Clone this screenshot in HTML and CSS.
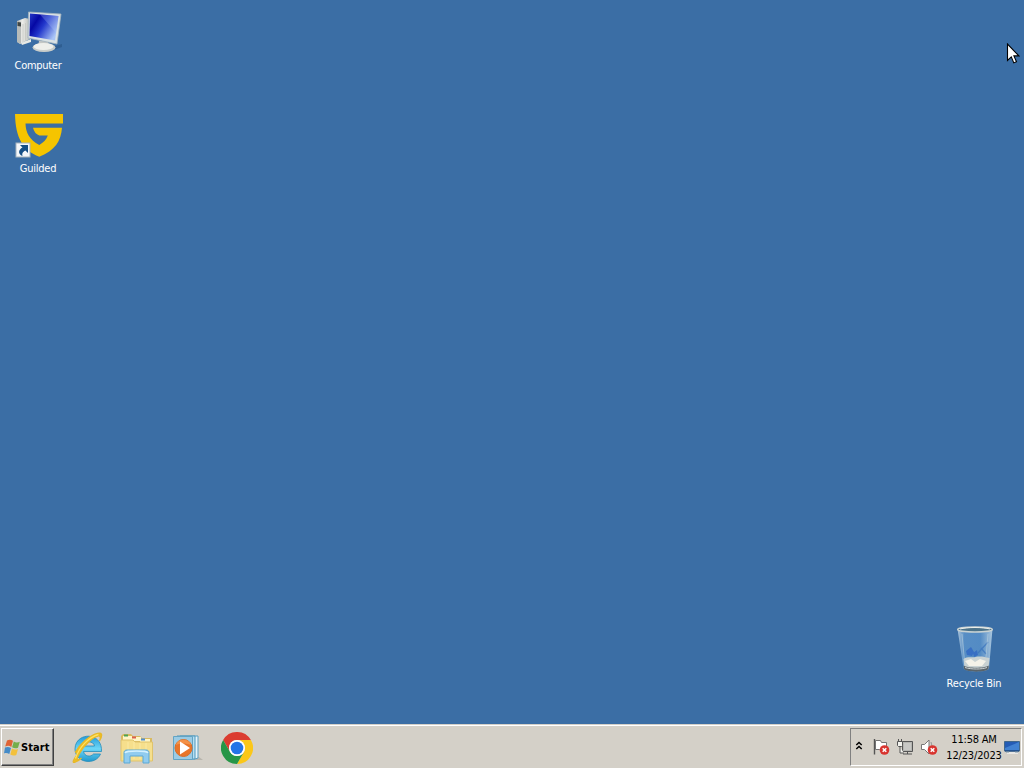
FILE: index.html
```html
<!DOCTYPE html>
<html lang="en">
<head>
<meta charset="utf-8">
<title>Desktop</title>
<link rel="stylesheet" href="styles.css">
</head>
<body>
<main class="desktop">
  <div class="shortcut computer">
    <svg width="48" height="48" viewBox="0 0 48 48">
      <defs>
        <linearGradient id="screen" x1="0" y1="0" x2="1" y2=".6"><stop offset="0" stop-color="#2639c8"/><stop offset=".3" stop-color="#0508a4"/><stop offset=".55" stop-color="#2338cc"/><stop offset="1" stop-color="#a9c4f6"/></linearGradient>
        <linearGradient id="tower" x1="0" y1="0" x2="1" y2="0"><stop offset="0" stop-color="#aeb2b0"/><stop offset=".4" stop-color="#eeeeea"/><stop offset="1" stop-color="#b9bcb8"/></linearGradient>
      </defs>
      <path d="M30 41l17-5v3l-14 5z" fill="#244d7d" opacity=".5"/>
      <path d="M2 13l8-3 5 1v20l-10 5-3-2z" fill="url(#tower)"/>
      <path d="M2 13l4 1v22l-4-2z" fill="#b7bbb9"/>
      <path d="M2.500 14l3.500.5v4l-3.500-.5z" fill="#404645"/>
      <path d="M8 16v18M10.500 15v19" stroke="#c9cbc6"/>
      <path d="M6 35l10-4v3l-9 3z" fill="#e8e9e4"/>
      <path d="M24 33h9l1 6H23z" fill="#c4c7c5"/>
      <ellipse cx="29" cy="39.500" rx="11.500" ry="4.500" fill="#c9cdca"/>
      <ellipse cx="28.500" cy="38.500" rx="10" ry="3.500" fill="#eeefeb"/>
      <path d="M13.500 4l32.500 2-4 30-29-6z" fill="#d9e2e5" stroke="#a2b3be" stroke-width=".8"/>
      <path d="M15 5.500L43.500 8 40 32.500l-25.500-4.500z" fill="url(#screen)"/>
      <path d="M25 6.500L43.500 8 41 24.800z" fill="#b9cefa" opacity=".25"/>
    </svg>
    <span class="caption">Computer</span>
  </div>

  <div class="shortcut guilded">
    <svg width="48" height="48" viewBox="0 0 48 48">
      <path d="M0 3h48v9.500H10.500c.2 9 4 16.500 13.800 21.500 4-2.500 7-5 8.500-9.500h-8.500q-5-2-6.300-7.800H47c-1 13.500-7 22.500-22.700 29C8 39.500.5 27 0 3z" fill="#f5c400"/>
      <rect x="1" y="32" width="14" height="14" fill="#f4f7fa" stroke="#a7b3bd"/>
      <path d="M5 34h8v8l-2.600-2.500c-3 1.500-3.400 3-2.900 5.500C2.500 43 3.500 38.500 7.500 36.500z" fill="#164f86"/>
    </svg>
    <span class="caption">Guilded</span>
  </div>

  <div class="shortcut recycle">
    <svg width="48" height="48" viewBox="0 0 48 48">
      <defs><linearGradient id="glass"><stop offset="0" stop-color="#c1d5e5" stop-opacity=".85"/><stop offset=".2" stop-color="#6098cf" stop-opacity=".75"/><stop offset=".65" stop-color="#5b95cf" stop-opacity=".75"/><stop offset="1" stop-color="#bfd7e8" stop-opacity=".85"/></linearGradient></defs>
      <path d="M5.500 5h35L37 44c-.5 5-25 5-25.500 0z" fill="url(#glass)"/>
      <path d="M11.500 35c4-3 9-1 12-2 5-1 9 0 14 1l-1 10c-3 3-21 3-24 0z" fill="#c9d2d3"/>
      <path d="M13 37l6-2 4 3 5-3 6 2-4 5H17z" fill="#f4f2e9"/>
      <path d="M11.500 41.500c4 3 21 3 25.300 0l-.3 3.500c-3 3.500-21.500 3.500-24.500 0z" fill="#59646b"/>
      <path d="M13 43.500c6 2 17 2 22 0" stroke="#ccd2d3" fill="none"/>
      <path d="M14 27l5-4 3 5-2 4-5-1zM21 29l4-3 1 5-4 2z" fill="#285fc3" opacity=".65"/>
      <path d="M26 29l10-11M29 24l5 6" fill="none" stroke="#3974bd" stroke-width="1.300" opacity=".7"/>
      <path d="M10 10l2.500 27M36 10l-2 23" stroke="#b6cfdf" opacity=".6"/>
      <ellipse cx="23" cy="5.500" rx="17.300" ry="2.500" fill="#4b7289" stroke="#c9d2d2" stroke-width="1.500"/>
      <path d="M8 5c7-2 23-2 30 0" fill="none" stroke="#eef0ec"/>
    </svg>
    <span class="caption">Recycle Bin</span>
  </div>

  <svg class="pointer" width="14" height="22" viewBox="0 0 14 22"><path d="M1.500 1v16.500l3.800-3.600 2.500 6 2.700-1.100-2.600-5.900h5z" fill="#fff" stroke="#000" stroke-width="1.100"/></svg>
</main>

<footer class="taskbar">
  <button class="start">
    <svg width="17" height="17" viewBox="0 0 17 17">
      <path d="M3 1.500c2-1 4-1 6 .3L7.300 8C5.500 6.500 3.500 6.600 1.200 7.500z" fill="#df6335"/>
      <path d="M9.800 2.500c2 1.300 4 1.200 6 .2l-1.800 6c-2 .9-3.700.8-5.900-.4z" fill="#74ae4c"/>
      <path d="M1 8.500c2-.9 4-.9 6 .5l-1.700 6c-2-1.300-3.800-1.300-5.300-.6z" fill="#458bc7"/>
      <path d="M8 9.500c2 1.300 4 1.300 6 .4l-1.700 6c-2 .8-4 .7-6-.5z" fill="#f3c13c"/>
    </svg>
    <span>Start</span>
  </button>
  <nav class="launchers">
    <svg width="32" height="32" viewBox="0 0 32 32">
      <defs><linearGradient id="ie" x1="0" y1="0" x2="0" y2="1"><stop stop-color="#259bd9"/><stop offset=".5" stop-color="#6dd6f7"/><stop offset="1" stop-color="#2198cd"/></linearGradient></defs>
      <path fill-rule="evenodd" d="M29.500 19.500H11.500c.8 5 7 6 10 2.500h7C23.500 34 3 31 3 17 3 0 30.500-1 29.500 19.500zM11.500 14h11c-.8-5.500-10-5.500-11 0z" fill="url(#ie)" stroke="#258cb9" stroke-width=".8"/>
      <path d="M5.500 22C1 28-.5 32 3.500 30c2-.8 4-2 6-4-5 3-5.500 2-2-4.500C12 13 21 5 26.500 4c2.200-.4 2 2.500 1 5C31.500 2 29.500.3 25.500 1.300 17 3.500 8 12 3.500 20z" fill="#edbd22" stroke="#e7b829" stroke-width="1.200"/>
      <path d="M3.500 26.500C7 15 17 5 26.500 2.500" stroke="#ffe160" stroke-width="1.300" fill="none"/>
    </svg>
    <svg width="34" height="32" viewBox="0 0 34 32">
      <path d="M1 4l2-2h8l2 2h7l2 2h10v21H1z" fill="#d9ba60"/>
      <path d="M3 4h9v4H3zM12 5h9v4h-9zM20 7h10v4H20z" fill="#fff5c5"/>
      <path d="M4 3.500h4" stroke="#4ca253" stroke-width="2"/><path d="M12 5.500h4" stroke="#db6050" stroke-width="2"/><path d="M21 7.500h4" stroke="#4f8ed2" stroke-width="2"/>
      <path d="M1 8h12l2 2h17.500v19H1z" fill="#f6df8c" stroke="#dfc36c"/>
      <path d="M8 10v17M14 10v17M20 11v16M26 11v16" stroke="#fff0af" opacity=".7"/>
      <path d="M4 31V21c0-2 1-3 3-3h19c2 0 3 1 3 3v10h-6v-7H10v7z" fill="#91ccef" stroke="#5ba8d5"/>
      <path d="M5 21c1-2 4-2 11.500-2s10.500 0 11.500 2" stroke="#d5f2ff" fill="none" stroke-width="1.500"/>
    </svg>
    <svg width="32" height="32" viewBox="0 0 32 32">
      <path d="M22 28h9l-4-3z" fill="#9c9a92" opacity=".5"/>
      <path d="M8 4h18v22l-3 1H8z" fill="#e5f4fa" stroke="#5b9fc3"/>
      <path d="M5 4h18v23H5z" fill="#b9def0" stroke="#4f98bd"/>
      <path d="M1.500 4.500h19v23h-19z" fill="#9bcbe4" stroke="#63a4c4"/>
      <circle cx="11.500" cy="16" r="8.500" fill="#e97529" stroke="#d76d29"/>
      <path d="M4 13c1-7 14-7 15 0-6-2-10-2-15 0z" fill="#ffad66" opacity=".5"/>
      <path d="M8 9.500L18 16 8 22.500z" fill="#fff"/>
    </svg>
    <svg width="32" height="32" viewBox="0 0 32 32">
      <path d="M2.140 8A16 16 0 0 1 29.860 8H16a8 8 0 0 0-6.930 12z" fill="#db3c30"/>
      <path d="M29.860 8A16 16 0 0 1 16 32l6.930-12A8 8 0 0 0 16 8z" fill="#fbc719"/>
      <path d="M16 32A16 16 0 0 1 2.140 8l6.930 12a8 8 0 0 0 13.860 0z" fill="#269647"/>
      <circle cx="16" cy="16" r="8" fill="#fff"/><circle cx="16" cy="16" r="6.300" fill="#2374e7"/>
    </svg>
  </nav>
  <section class="tray">
    <svg class="chevrons" width="8" height="10" viewBox="0 0 8 10"><path d="M1.300 4L4 1.500 6.700 4M1.300 8L4 5.500 6.700 8" fill="none" stroke="#000" stroke-width="1.500"/></svg>
    <svg class="status" width="18" height="18" viewBox="0 0 18 18">
      <path d="M2.500 1v15.500" stroke="#555" stroke-width="1.400"/><path d="M3.500 2.500h5l1 2h5v8h-6l-1-1h-4z" fill="#fff" stroke="#747474"/>
      <circle cx="12.500" cy="12" r="4.800" fill="#d8342f"/><path d="M10.700 10.200l3.600 3.600m0-3.600l-3.600 3.600" stroke="#fff" stroke-width="1.500"/>
    </svg>
    <svg class="status" width="18" height="18" viewBox="0 0 18 18">
      <path d="M6.500 3.500h10v10h-10z" fill="#b5b5b1" stroke="#555"/><path d="M8 5h7v7H8z" fill="#c8c8c5"/><path d="M11.500 14v2M7 16h9" stroke="#555"/>
      <path d="M2.500 1v3M5.500 1v3M1.500 3.500h5v4l-1 1h-3l-1-1zM4 9v6h4" fill="#f3f3ee" stroke="#555"/>
    </svg>
    <svg class="status" width="18" height="18" viewBox="0 0 18 18">
      <path d="M1.500 6.500h3l4.500-4.500v14l-4.500-4.500h-3z" fill="#fff" stroke="#777"/><path d="M11 4q2 4 0 8" fill="none" stroke="#999"/>
      <circle cx="12.500" cy="12" r="4.800" fill="#d8342f"/><path d="M10.700 10.200l3.600 3.600m0-3.600l-3.600 3.600" stroke="#fff" stroke-width="1.500"/>
    </svg>
    <div class="clock"><span class="time">11:58 AM</span><span class="date">12/23/2023</span></div>
    <svg class="show-desktop" width="16" height="14" viewBox="0 0 16 14">
      <path d="M.5 1.500h15v9.500H.5z" fill="#245cb5" stroke="#42698c"/><path d="M1 8L15 2v8H1z" fill="#4182d2"/><path d="M1 11h14" stroke="#17447e"/><path d="M3 13h11" stroke="#fff"/><path d="M2 12h3M11 12h3" stroke="#7893a7"/>
    </svg>
  </section>
</footer>
</body>
</html>
```
FILE: styles.css
```css
* { box-sizing: border-box; }
body {
  margin: 0;
  height: 768px;
  overflow: hidden;
  display: flex;
  flex-direction: column;
  font: 11px/13px "DejaVu Sans Condensed", "DejaVu Sans", sans-serif;
  background: #3b6ea5;
}
svg { display: block; flex: none; }
.desktop { position: relative; height: 724px; }
.shortcut {
  position: absolute;
  width: 76px;
  display: flex;
  flex-direction: column;
  align-items: center;
  gap: 3px;
  color: #fff;
}
.computer { left: 0; top: 8px; }
.computer svg { margin-left: 1px; }
.guilded { left: 0; top: 111px; }
.guilded svg { margin-left: 2px; }
.recycle { left: 936px; top: 624px; gap: 5px; }
.recycle svg { margin-left: 4px; }
.caption { white-space: nowrap; letter-spacing: -.3px; }
.recycle .caption { letter-spacing: -.2px; }
.guilded .caption { letter-spacing: -.25px; }
.pointer { position: absolute; left: 1006px; top: 43px; }

.taskbar {
  height: 44px;
  display: flex;
  align-items: flex-start;
  padding: 3px 1px 0;
  background: #d4d0c8;
  border-top: 1px solid #d4d0c8;
  box-shadow: inset 0 1px #fff;
}
.start {
  width: 53px;
  height: 38px;
  padding: 0 0 0 2px;
  display: flex;
  align-items: center;
  font: bold 11px/13px "DejaVu Sans Condensed", "DejaVu Sans", sans-serif;
  letter-spacing: .1px;
  color: #000;
  background: #d4d0c8;
  border: 1px solid;
  border-color: #fff #404040 #404040 #fff;
  box-shadow: inset -1px -1px #808080;
}
.launchers { display: flex; align-items: center; gap: 17px; height: 40px; padding-left: 18px; }
.launchers svg:nth-child(2) { margin: 0 1px 0 -1px; }
.tray {
  display: flex;
  align-items: center;
  width: 172px;
  height: 38px;
  margin-left: auto;
  margin-right: 1px;
  border: 1px solid;
  border-color: #808080 #fff #fff #808080;
}
.chevrons { margin: -3px 9px 0 4px; }
.status { margin-right: 6px; }
.clock {
  width: 58px;
  margin-left: 1px;
  display: flex;
  flex-direction: column;
  align-items: center;
  gap: 3px;
  white-space: nowrap;
}
.time { letter-spacing: -.2px; }
.date { letter-spacing: -.15px; }
.show-desktop { margin-left: 1px; }
```
